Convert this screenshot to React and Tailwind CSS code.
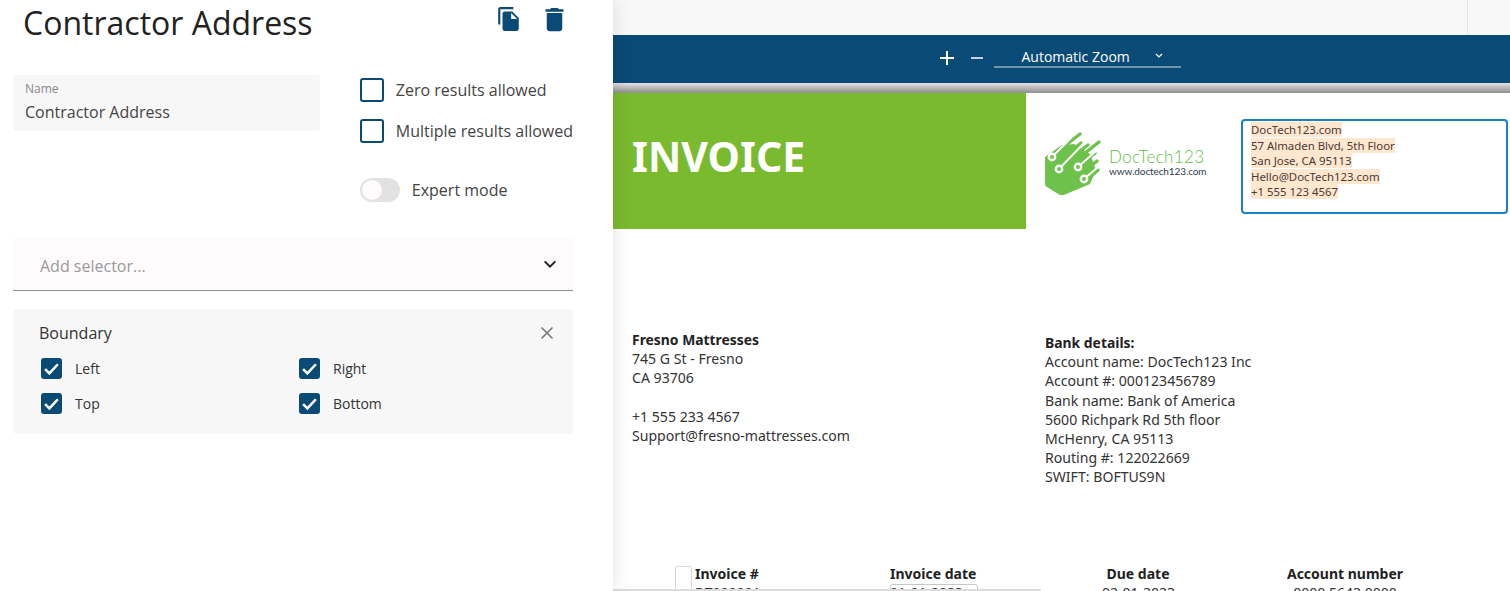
import React from 'react';

const sans = "font-['Open_Sans',sans-serif]";

const Box = ({ checked, label }) => (
    <div className="flex items-center">
        <span className="w-[21px] h-[21px] rounded-[3px] bg-[#0a4a76] flex items-center justify-center">
            {checked && (
                <svg width="17" height="17" viewBox="0 0 24 24" fill="none" stroke="#fff" strokeWidth="3.6">
                    <path d="M3 13l6 6L21 6" />
                </svg>
            )}
        </span>
        <span className="ml-[13px] text-[14px] text-[#333]">{label}</span>
    </div>
);

const Option = ({ label }) => (
    <div className="flex items-center h-[24px]">
        <span className="w-[24px] h-[24px] shrink-0 rounded-[3px] border-2 border-[#0a4a76] bg-white" />
        <span className="ml-[12px] text-[16px] text-[#444] whitespace-nowrap">{label}</span>
    </div>
);

// Logo DocTech123
const Logo = () => (
    <svg width="66" height="72" viewBox="0 0 66 72" fill="none" className="shrink-0">
        <path d="M5 29 L22 17 L34 16 L50 26 L56 42 L50 56 L25 66.5 Q22 68 19 66.5 L7 59 Q5 58 5 56 Z" fill="#6cc24a" />
        <g stroke="#6cc24a" strokeWidth="3.4" strokeLinecap="round">
            <path d="M17 24 L40 6" />
            <path d="M22 30 L41 15" />
            <path d="M32 29 L48 17" />
            <path d="M40 29 L59 14" />
            <path d="M44 34 L55 25" />
            <path d="M48 40 L57 33" />
            <path d="M50 49 L58 42" />
        </g>
        <g stroke="#fff" strokeWidth="1.9">
            <path d="M12 29 L31 10" />
            <path d="M19 41 L46 13" />
            <path d="M38 39 L64 16" />
            <path d="M44 51 L64 34" />
        </g>
        <path d="M52 30 L64 22 L64 10 L58 8 L53 20 Z M51 46 L64 44 L64 27 L58 31 Z" fill="none" />
        <g fill="#6cc24a" stroke="#fff" strokeWidth="2.4">
            <circle cx="12" cy="29" r="3.2" />
            <circle cx="19" cy="41" r="3.2" />
            <circle cx="38" cy="39" r="3.2" />
            <circle cx="44" cy="51" r="3.2" />
        </g>
    </svg>
);

const Col = ({ className, title, value }) => (
    <div className={`whitespace-nowrap ${className}`}>
        <div className="font-bold text-[#222]">{title}</div>
        <div className="text-[#333]">{value}</div>
    </div>
);

export default function App() {
    return (
        <div className={`relative flex h-[591px] w-[1510px] overflow-hidden bg-white ${sans}`}>
            {/* Panneau gauche */}
            <div className="relative z-10 w-[613px] h-full shrink-0 bg-white shadow-[0_0_18px_rgba(0,0,0,0.12)] pl-[13px] pr-[40px]">
                <div className="flex items-start justify-between h-[75px]">
                    <h1 className="ml-[10px] mt-[1px] text-[32px] leading-[44px] font-normal text-[#222]">Contractor Address</h1>
                    <div className="flex items-start mt-[5px] mr-[3px] w-[74px]">
                        <svg width="26" height="26" viewBox="0 0 24 24" fill="#0a4a76" className="mt-[1px]">
                            <path d="M16 1H4c-1.1 0-2 .9-2 2v14h2V3h12V1zm-1 4l6 6v10c0 1.1-.9 2-2 2H7.99C6.89 23 6 22.1 6 21l.01-14c0-1.1.89-2 1.99-2h7zm-1 7h5.5L14 6.5V12z" />
                        </svg>
                        <svg width="31" height="31" viewBox="0 0 24 24" fill="#0a4a76" className="ml-[17px] -mt-[1px]">
                            <path d="M6 19c0 1.1.9 2 2 2h8c1.1 0 2-.9 2-2V7H6v12zM19 4h-3.5l-1-1h-5l-1 1H5v2h14V4z" />
                        </svg>
                    </div>
                </div>

                <div className="flex items-start h-[163px]">
                    <div className="w-[307px] h-[56px] rounded-[4px] bg-[#f7f7f7] px-[12px] pt-[6px]">
                        <div className="text-[12px] leading-[16px] text-[#888]">Name</div>
                        <div className="text-[16px] leading-[30px] text-[#444]">Contractor Address</div>
                    </div>
                    <div className="ml-[40px] pt-[3px]">
                        <Option label="Zero results allowed" />
                        <div className="mt-[17px]"><Option label="Multiple results allowed" /></div>
                        <div className="flex items-center mt-[35px]">
                            <span className="relative w-[40px] h-[24px] rounded-full bg-[#e2e2e2]">
                                <span className="absolute left-[2px] top-[2px] w-[20px] h-[20px] rounded-full bg-[#fffbfd]" />
                            </span>
                            <span className="ml-[12px] text-[16px] text-[#444]">Expert mode</span>
                        </div>
                    </div>
                </div>

                <div className="flex items-center justify-between w-[560px] h-[53px] bg-[#fffbfd] border-b border-[#8c8c8c] pl-[27px] pr-[15px] pt-[4px]">
                    <span className="text-[16px] text-[#999]">Add selector...</span>
                    <svg width="16" height="16" viewBox="0 0 24 24" fill="none" stroke="#222" strokeWidth="3" className="-mt-[4px]">
                        <path d="M4 8l8 8 8-8" />
                    </svg>
                </div>

                <div className="w-[560px] h-[125px] mt-[18px] rounded-[4px] bg-[#f7f7f7] pl-[26px] pr-[19px] pt-[12px]">
                    <div className="flex items-center justify-between h-[24px]">
                        <span className="text-[16px] text-[#333]">Boundary</span>
                        <svg width="14" height="14" viewBox="0 0 14 14" stroke="#777" strokeWidth="1.6">
                            <path d="M1.5 1.5l11 11M12.5 1.5l-11 11" />
                        </svg>
                    </div>
                    <div className="grid grid-cols-[258px_1fr] gap-y-[14px] mt-[13px] pl-[2px]">
                        <Box checked label="Left" />
                        <Box checked label="Right" />
                        <Box checked label="Top" />
                        <Box checked label="Bottom" />
                    </div>
                </div>
            </div>

            {/* Visionneuse PDF */}
            <div className="flex-1 min-w-0 h-full">
                <div className="h-[35px] bg-[#f8f8f8] flex justify-end">
                    <div className="w-[43px] border-l border-[#e4e4e4]" />
                </div>
                <div className="h-[48px] bg-[#0a4a76] flex justify-center text-white">
                    <div className="flex items-start pr-[3px]">
                        <svg width="14" height="14" viewBox="0 0 14 14" stroke="#fff" strokeWidth="2" className="mt-[16px]">
                            <path d="M7 0v14M0 7h14" />
                        </svg>
                        <svg width="14" height="14" viewBox="0 0 14 14" stroke="#c8d4dd" strokeWidth="2" className="mt-[16px] ml-[16px]">
                            <path d="M1 7h12" />
                        </svg>
                        <div className="relative w-[187px] h-[33px] ml-[10px] border-b-2 border-[#6f93ab]">
                            <span className="absolute left-[28px] top-[13px] text-[14px] leading-[18px]">Automatic Zoom</span>
                            <svg width="8" height="6" viewBox="0 0 8 6" fill="none" stroke="#fff" strokeWidth="1.2" className="absolute left-[161px] top-[18px]">
                                <path d="M1 1l3 3 3-3" />
                            </svg>
                        </div>
                    </div>
                </div>
                <div className="h-[10px] bg-gradient-to-b from-[#e4e4e4] to-[#8e8e8e]" />

                <div className="font-['Noto_Sans',sans-serif] text-[14.1px] leading-[19.2px] text-[#333]">
                    <div className="flex h-[136px]">
                        <div className="w-[413px] bg-[#7aba2e] pl-[19px] pt-[33px] text-[41px] leading-[60px] font-bold text-white">INVOICE</div>
                        <div className="flex items-start w-[215px] pl-[14px] pt-[35px]">
                            <Logo />
                            <div className="ml-[3px] mt-[20px] font-['Lato',sans-serif] whitespace-nowrap">
                                <div className="text-[17px] leading-[18px] tracking-[0.35px] font-light text-[#5fbf45]">DocTech123</div>
                                <div className="text-[10px] leading-[10px] tracking-[-0.1px] text-[#2d3b4e]">www.doctech123.com</div>
                            </div>
                        </div>
                        <div className="w-[267px] h-[95px] mt-[26px] rounded-[4px] border-2 border-[#1a80c9] pl-[8px] pt-[1px] text-[11.4px] leading-[15.5px] text-[#4a3a32]">
                            <div><span className="bg-[#ffe6cf]">DocTech123.com</span></div>
                            <div><span className="bg-[#ffe6cf]">57 Almaden Blvd, 5th Floor</span></div>
                            <div><span className="bg-[#ffe6cf]">San Jose, CA 95113</span></div>
                            <div><span className="bg-[#ffe6cf]">Hello@DocTech123.com</span></div>
                            <div><span className="bg-[#ffe6cf]">+1 555 123 4567</span></div>
                        </div>
                    </div>

                    <div className="flex h-[335px] pt-[100.8px]">
                        <div className="w-[413px] pl-[19px]">
                            <div className="font-bold text-[13.9px] text-[#222]">Fresno Mattresses</div>
                            <div>745 G St - Fresno</div>
                            <div>CA 93706</div>
                            <div className="mt-[19.2px]">+1 555 233 4567</div>
                            <div>Support@fresno-mattresses.com</div>
                        </div>
                        <div className="pl-[19px] pt-[3.2px]">
                            <div className="font-bold text-[13.9px] text-[#222]">Bank details:</div>
                            <div>Account name: DocTech123 Inc</div>
                            <div>Account #: 000123456789</div>
                            <div>Bank name: Bank of America</div>
                            <div>5600 Richpark Rd 5th floor</div>
                            <div>McHenry, CA 95113</div>
                            <div>Routing #: 122022669</div>
                            <div>SWIFT: BOFTUS9N</div>
                        </div>
                    </div>
                </div>
            </div>

            {/* Fin de page, coupée par le bas */}
            <div className="absolute left-[613px] top-[565px] w-[897px] h-[26px] font-['Noto_Sans',sans-serif] text-[14px] leading-[19.2px] overflow-hidden">
                <div className="absolute left-[62px] top-[1px] w-[17px] h-[40px] rounded-[3px] border border-[#d5d5d5]" />
                <div className="absolute left-[277px] top-[19px] w-[88px] h-[20px] rounded-[3px] border border-[#c8c8c8]" />
                <Col className="absolute left-[82px] -top-[1px]" title="Invoice #" value="DT000001" />
                <Col className="absolute left-[277px] -top-[1px]" title="Invoice date" value="01-01-2023" />
                <Col className="absolute left-[489px] -top-[1px] w-[72px] text-center" title="Due date" value="02-01-2023" />
                <Col className="absolute left-[660px] -top-[1px] w-[144px] text-center" title="Account number" value="0000 5643 0000" />
                <div className="absolute left-0 top-[24px] w-[428px] h-[2px] rounded-r bg-[#dcdcdc]" />
            </div>
        </div>
    );
}
